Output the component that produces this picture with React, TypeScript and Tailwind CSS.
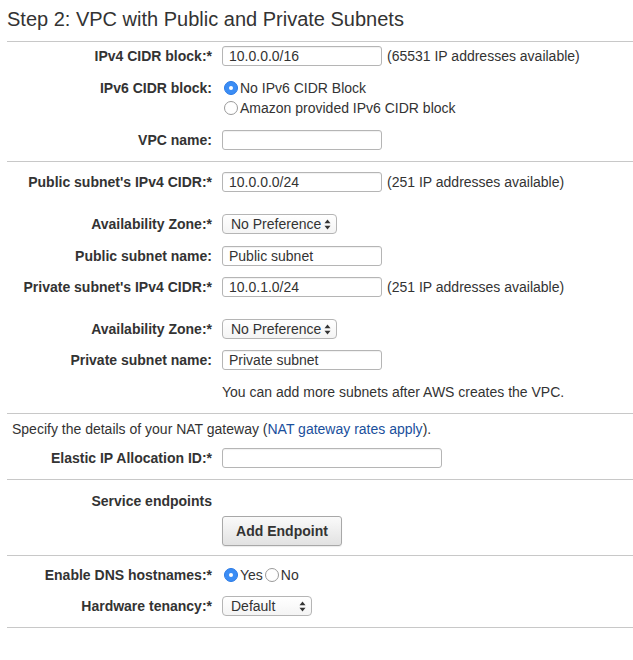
import type { ReactNode } from 'react'

function Hr({ className = '' }: { className?: string }) {
  return <div className={`h-px bg-[#c8c8c8] ${className}`} />
}

function Row({ label, className = '', children }: { label: string; className?: string; children?: ReactNode }) {
  return (
    <div className={`flex h-[20px] items-center ${className}`}>
      <div className="w-[205px] shrink-0 text-right font-bold">{label}</div>
      <div className="ml-[10px] flex items-center">{children}</div>
    </div>
  )
}

function TextBox({ value = '', width = 'w-[160px]' }: { value?: string; width?: string }) {
  return (
    <div className={`flex h-[20px] items-center rounded-[3px] border border-[#b5b5b5] bg-white pl-[6px] shadow-[inset_0_1px_1px_rgba(0,0,0,0.06)] ${width}`}>
      {value}
    </div>
  )
}

function Arrows() {
  return (
    <svg width="7" height="11" viewBox="0 0 7 11" className="text-[#333]">
      <path d="M3.5 0.5 L6.5 4.2 L0.5 4.2 Z" fill="currentColor" />
      <path d="M3.5 10.5 L6.5 6.8 L0.5 6.8 Z" fill="currentColor" />
    </svg>
  )
}

function Select({ value, width }: { value: string; width: string }) {
  return (
    <div className={`flex h-[20px] items-center justify-between rounded-[4px] border border-[#b5b5b5] bg-gradient-to-b from-white to-[#f4f4f4] pl-[8px] pr-[5px] ${width}`}>
      <span>{value}</span>
      <Arrows />
    </div>
  )
}

function Radio({ checked }: { checked?: boolean }) {
  return checked ? (
    <span className="flex size-[14px] items-center justify-center rounded-full bg-[#3b8df5] border border-[#2a7ae6]">
      <span className="size-[4px] rounded-full bg-white" />
    </span>
  ) : (
    <span className="size-[14px] rounded-full border border-[#9a9a9a] bg-white" />
  )
}

export default function App() {
  return (
    <div className="w-[633px] bg-white pl-[7px] text-[14px] text-[#333]" style={{ fontFamily: '"Liberation Sans", Arial, Helvetica, sans-serif' }}>
      <div className="h-[41px] pt-[7px] text-[20px] leading-[24px]">Step 2: VPC with Public and Private Subnets</div>
      <Hr />

      <Row label="IPv4 CIDR block:*" className="mt-[4px]">
        <TextBox value="10.0.0.0/16" />
        <span className="ml-[5px]">(65531 IP addresses available)</span>
      </Row>
      <Row label="IPv6 CIDR block:" className="mt-[12px]">
        <span className="ml-[2px] flex items-center gap-[2px]">
          <Radio checked />
          No IPv6 CIDR Block
        </span>
      </Row>
      <div className="ml-[217px] flex h-[20px] items-center gap-[2px]">
        <Radio />
        Amazon provided IPv6 CIDR block
      </div>
      <Row label="VPC name:" className="mt-[12px]">
        <TextBox />
      </Row>
      <Hr className="mt-[11px]" />

      <Row label="Public subnet's IPv4 CIDR:*" className="mt-[10px]">
        <TextBox value="10.0.0.0/24" />
        <span className="ml-[5px]">(251 IP addresses available)</span>
      </Row>
      <Row label="Availability Zone:*" className="mt-[22px]">
        <Select value="No Preference" width="w-[115px]" />
      </Row>
      <Row label="Public subnet name:" className="mt-[12px]">
        <TextBox value="Public subnet" />
      </Row>
      <Row label="Private subnet's IPv4 CIDR:*" className="mt-[11px]">
        <TextBox value="10.0.1.0/24" />
        <span className="ml-[5px]">(251 IP addresses available)</span>
      </Row>
      <Row label="Availability Zone:*" className="mt-[22px]">
        <Select value="No Preference" width="w-[115px]" />
      </Row>
      <Row label="Private subnet name:" className="mt-[11px]">
        <TextBox value="Private subnet" />
      </Row>
      <div className="mt-[12px] ml-[215px] flex h-[20px] items-center">You can add more subnets after AWS creates the VPC.</div>
      <Hr className="mt-[11px]" />

      <div className="mt-[5px] ml-[5px] flex h-[20px] items-center">
        Specify the details of your NAT gateway (<span className="text-[#1a4f9c]">NAT gateway rates apply</span>).
      </div>
      <Row label="Elastic IP Allocation ID:*" className="mt-[9px]">
        <TextBox width="w-[220px]" />
      </Row>
      <Hr className="mt-[11px]" />

      <Row label="Service endpoints" className="mt-[11px]" />
      <div className="mt-[5px] ml-[215px]">
        <button className="h-[30px] w-[120px] rounded-[3px] border border-[#a8a8a8] bg-gradient-to-b from-[#fafafa] to-[#e2e2e2] font-bold text-[#333] shadow-[0_1px_1px_rgba(0,0,0,0.08)]">
          Add Endpoint
        </button>
      </div>
      <Hr className="mt-[9px]" />

      <Row label="Enable DNS hostnames:*" className="mt-[9px]">
        <span className="ml-[2px] flex items-center gap-[2px]">
          <Radio checked />
          Yes
        </span>
        <span className="ml-[2px] flex items-center gap-[2px]">
          <Radio />
          No
        </span>
      </Row>
      <Row label="Hardware tenancy:*" className="mt-[11px]">
        <Select value="Default" width="w-[90px]" />
      </Row>
      <Hr className="mt-[11px]" />
      <div className="h-[31px]" />
    </div>
  )
}
